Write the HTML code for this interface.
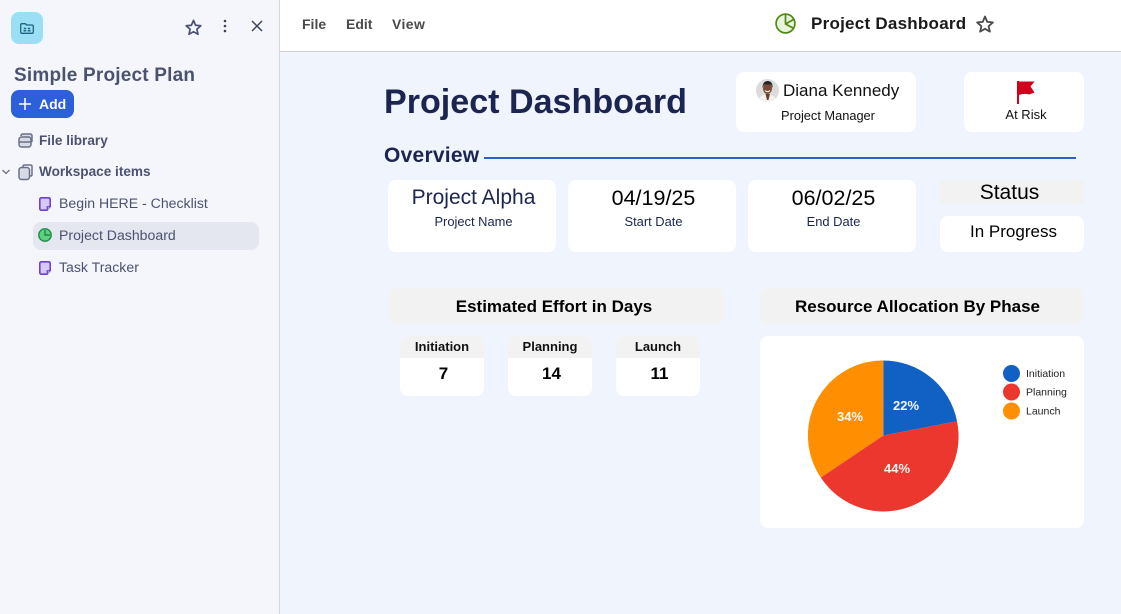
<!DOCTYPE html>
<html><head><meta charset="utf-8"><style>
html,body{margin:0;padding:0;width:1121px;height:614px;overflow:hidden;background:#f0f4fd;font-family:"Liberation Sans",sans-serif}
.a{position:absolute;white-space:nowrap}
.c{position:absolute;white-space:nowrap;text-align:center}
.b{position:absolute;background:#fff;border-radius:8px}
.g{position:absolute;background:#f2f2f2;border-radius:8px}
svg{position:absolute;overflow:visible}
.s{color:#4b5270;font-size:13.6px;font-weight:bold}
.n{color:#4b5270;font-size:14.1px}
</style></head><body>
<div class="a" style="left:0;top:0;width:279px;height:614px;background:#f5f6fb;border-right:1px solid #d4d6de"></div>
<div class="a" style="left:280px;top:0;width:841px;height:51px;background:#fff;border-bottom:1px solid #cfd0d3"></div>

<div class="a" style="left:11px;top:12px;width:32px;height:32px;background:#9bdff5;border-radius:8px"></div>
<svg style="left:20px;top:23px" width="14" height="11" viewBox="0 0 14 11" fill="none" stroke="#1d6480" stroke-width="1.3"><path d="M.7 1.800V9Q.7 10.300 2 10.300H12Q13.300 10.300 13.300 9V3.200Q13.300 2 12 2H6.500L5.300.7H1.800Q.7.700.7 1.800Z"/><path d="M3.800 5.500H6.200M7.800 5.500H10.200M3.500 7.800H6.200M7.800 7.800H10.500" stroke-width="1.500"/></svg>
<svg style="left:185px;top:19px" width="17" height="16" viewBox="0 0 24 23" fill="none" stroke="#4a5170" stroke-width="2.4" stroke-linejoin="round"><path d="M12 2l3 7 7.500.7-5.700 5 1.700 7.300L12 18.200 5.500 22l1.700-7.300-5.700-5L9 9z"/></svg>
<svg style="left:222px;top:19px" width="6" height="14"><circle cx="3" cy="2" r="1.300" fill="#3c4258"/><circle cx="3" cy="7" r="1.300" fill="#3c4258"/><circle cx="3" cy="12" r="1.300" fill="#3c4258"/></svg>
<svg style="left:251px;top:20px" width="12" height="12" fill="none" stroke="#3c4258" stroke-width="1.500"><path d="M1 1L11 11M11 1L1 11"/></svg>

<div class="a" style="left:14px;top:64px;font-size:19px;font-weight:bold;color:#4b5270;line-height:23px;letter-spacing:.2px">Simple Project Plan</div>
<div class="a" style="left:11px;top:90px;width:63px;height:28px;background:#2c5fd9;border-radius:8px"></div>
<svg style="left:19px;top:98px" width="12" height="12" stroke="#fff" stroke-width="1.500"><path d="M6 0V12M0 6H12"/></svg>
<div class="a" style="left:39px;top:96px;font-size:14px;font-weight:bold;color:#fff;line-height:16px">Add</div>

<svg style="left:18px;top:133px" width="15" height="15" viewBox="0 0 15 15" fill="#d8dbe6" stroke="#6a7088" stroke-width="1.500"><path d="M3 3Q3 1 5 1H12Q14 1 14 3V9"/><rect x="1" y="4" width="12" height="10" rx="2.500"/><path d="M1 9H13" /></svg>
<div class="a s" style="left:39px;top:132px;line-height:17px">File library</div>
<svg style="left:2px;top:169px" width="8" height="6" fill="none" stroke="#6a7088" stroke-width="1.300"><path d="M.5 1L4 4.500L7.500 1"/></svg>
<svg style="left:18px;top:164px" width="15" height="16" viewBox="0 0 15 16" fill="#d8dbe6" stroke="#6a7088" stroke-width="1.500"><path d="M5 3V2.500Q5 1 6.500 1H12.500Q14 1 14 2.500V10.500Q14 12 12.500 12H12" fill="none"/><rect x="1" y="3.500" width="10.500" height="12" rx="2.500"/></svg>
<div class="a s" style="left:39px;top:163px;line-height:17px">Workspace items</div>

<svg style="left:39px;top:197px" width="12" height="14" viewBox="0 0 12 14"><path d="M2.500 .8H9.500Q11.200 .8 11.200 2.500V9.500L8 13.200H2.500Q.8 13.200 .8 11.500V2.500Q.8 .8 2.500 .8Z" fill="#d5c9fa" stroke="#6d3fe0" stroke-width="1.600"/><path d="M11 9.800H8.300V13" fill="#fff" stroke="#6d3fe0" stroke-width="1.300"/></svg>
<div class="a n" style="left:59px;top:195px;line-height:17px">Begin HERE - Checklist</div>
<div class="a" style="left:33px;top:222px;width:226px;height:28px;background:#e4e6f0;border-radius:8px"></div>
<svg style="left:38px;top:228px" width="14" height="14" viewBox="0 0 14 14"><circle cx="7" cy="7" r="6.200" fill="#5fd07f" stroke="#1f8a45" stroke-width="1.400"/><path d="M7 2V7H12" fill="none" stroke="#1f8a45" stroke-width="1.400"/></svg>
<div class="a n" style="left:59px;top:227px;line-height:17px">Project Dashboard</div>
<svg style="left:39px;top:261px" width="12" height="14" viewBox="0 0 12 14"><path d="M2.500 .8H9.500Q11.200 .8 11.200 2.500V9.500L8 13.200H2.500Q.8 13.200 .8 11.500V2.500Q.8 .8 2.500 .8Z" fill="#d5c9fa" stroke="#6d3fe0" stroke-width="1.600"/><path d="M11 9.800H8.300V13" fill="#fff" stroke="#6d3fe0" stroke-width="1.300"/></svg>
<div class="a n" style="left:59px;top:259px;line-height:17px">Task Tracker</div>

<div class="a" style="left:302px;top:16px;font-size:14px;font-weight:bold;color:#4a4a4a;line-height:16px">File</div>
<div class="a" style="left:346px;top:16px;font-size:14px;font-weight:bold;color:#4a4a4a;line-height:16px">Edit</div>
<div class="a" style="left:392px;top:16px;font-size:14px;font-weight:bold;color:#4a4a4a;line-height:16px;letter-spacing:.4px">View</div>

<svg style="left:775px;top:13px" width="21" height="21" viewBox="0 0 21 21" fill="#eaf3dc" stroke="#4f8a10" stroke-width="1.700"><circle cx="10.500" cy="10.500" r="9.400"/><path d="M10.500 1.500V11L18 15M10.500 11L18.500 6.500" fill="none"/></svg>
<div class="a" style="left:811px;top:14px;font-size:17px;font-weight:bold;color:#1a1a1a;line-height:20px;letter-spacing:.25px">Project Dashboard</div>
<svg style="left:976px;top:15px" width="18" height="18" viewBox="0 0 24 24" fill="none" stroke="#4a4a4a" stroke-width="2.400" stroke-linejoin="round"><path d="M12 2l3 7.200 7.500.7-5.700 5 1.700 7.300L12 18.400 5.500 22.200l1.700-7.300-5.700-5L9 9.200z"/></svg>

<div class="a" style="left:384px;top:81px;font-size:34.100px;font-weight:bold;color:#1c2550;line-height:43px">Project Dashboard</div>
<div class="a" style="left:384px;top:144px;font-size:21px;font-weight:bold;color:#1c2550;line-height:24px;letter-spacing:.25px">Overview</div>
<div class="a" style="left:484px;top:157px;width:592px;height:2px;background:#2c5fd0"></div>

<div class="b" style="left:736px;top:72px;width:180px;height:60px"></div>
<svg style="left:756px;top:79px" width="23" height="23" viewBox="0 0 23 23"><defs><clipPath id="p"><circle cx="11.500" cy="11.500" r="11.500"/></clipPath></defs><g clip-path="url(#p)"><rect width="23" height="23" fill="#dcdcdc"/><path d="M2 23Q3 16 11 15Q20 16 21 23Z" fill="#f2f2f2"/><ellipse cx="11.500" cy="9.500" rx="4.500" ry="5.500" fill="#7a4a35"/><path d="M6.500 9Q6.500 2 12 2Q17 2.500 16.500 9L15 5.500H8Z" fill="#222"/><path d="M9 11.500Q11.500 14 14 11.500" stroke="#fff" fill="none"/><path d="M9.500 15L11 21H12.500L14 15Z" fill="#6a3f2e"/></g></svg>
<div class="a" style="left:783px;top:80px;font-size:17px;color:#111;line-height:21px">Diana Kennedy</div>
<div class="c" style="left:736px;top:108px;width:184px;font-size:12.800px;color:#111;line-height:16px">Project Manager</div>
<div class="b" style="left:964px;top:72px;width:120px;height:60px"></div>
<svg style="left:1017px;top:81px" width="18" height="23"><path d="M0 0H2V23H0Z" fill="#d0021b"/><path d="M2 0.500H17.500L13.500 5.500L17.500 11.500L12 13.500Q7 12 2 14Z" fill="#d0021b"/></svg>
<div class="c" style="left:964px;top:107px;width:124px;font-size:13px;color:#111;line-height:16px">At Risk</div>

<div class="b" style="left:388px;top:180px;width:168px;height:72px"></div>
<div class="c" style="left:388px;top:186px;width:171px;font-size:21px;color:#1c2550;line-height:24px">Project Alpha</div>
<div class="c" style="left:388px;top:214px;width:171px;font-size:12.900px;color:#1c2550;line-height:16px">Project Name</div>
<div class="b" style="left:568px;top:180px;width:168px;height:72px"></div>
<div class="c" style="left:568px;top:186px;width:171px;font-size:21.500px;color:#000;line-height:24px">04/19/25</div>
<div class="c" style="left:568px;top:214px;width:171px;font-size:12.900px;color:#1c2550;line-height:16px">Start Date</div>
<div class="b" style="left:748px;top:180px;width:168px;height:72px"></div>
<div class="c" style="left:748px;top:186px;width:171px;font-size:21.500px;color:#000;line-height:24px">06/02/25</div>
<div class="c" style="left:748px;top:214px;width:171px;font-size:12.900px;color:#1c2550;line-height:16px">End Date</div>
<div class="g" style="left:940px;top:180px;width:144px;height:24px;border-radius:4px"></div>
<div class="c" style="left:940px;top:181px;width:139px;font-size:21px;color:#000;line-height:24px">Status</div>
<div class="b" style="left:940px;top:216px;width:144px;height:36px"></div>
<div class="c" style="left:940px;top:222px;width:147px;font-size:17px;color:#000;line-height:20px">In Progress</div>

<div class="g" style="left:388px;top:288px;width:336px;height:36px"></div>
<div class="c" style="left:388px;top:297px;width:332px;font-size:17px;font-weight:bold;color:#000;line-height:20px">Estimated Effort in Days</div>
<div class="g" style="left:760px;top:288px;width:324px;height:36px"></div>
<div class="c" style="left:760px;top:297px;width:315px;font-size:17px;font-weight:bold;color:#000;line-height:20px">Resource Allocation By Phase</div>

<div class="b" style="left:400px;top:336px;width:84px;height:60px"></div>
<div class="a" style="left:400px;top:336px;width:84px;height:22px;background:#f2f2f2;border-radius:8px 8px 0 0"></div>
<div class="c" style="left:400px;top:338px;width:84px;font-size:13px;font-weight:bold;color:#111;line-height:17px">Initiation</div>
<div class="c" style="left:400px;top:363px;width:87px;font-size:17px;font-weight:bold;color:#000;line-height:21px">7</div>
<div class="b" style="left:508px;top:336px;width:84px;height:60px"></div>
<div class="a" style="left:508px;top:336px;width:84px;height:22px;background:#f2f2f2;border-radius:8px 8px 0 0"></div>
<div class="c" style="left:508px;top:338px;width:84px;font-size:13px;font-weight:bold;color:#111;line-height:17px">Planning</div>
<div class="c" style="left:508px;top:363px;width:87px;font-size:17px;font-weight:bold;color:#000;line-height:21px">14</div>
<div class="b" style="left:616px;top:336px;width:84px;height:60px"></div>
<div class="a" style="left:616px;top:336px;width:84px;height:22px;background:#f2f2f2;border-radius:8px 8px 0 0"></div>
<div class="c" style="left:616px;top:338px;width:84px;font-size:13px;font-weight:bold;color:#111;line-height:17px">Launch</div>
<div class="c" style="left:616px;top:363px;width:87px;font-size:17px;font-weight:bold;color:#000;line-height:21px">11</div>

<div class="b" style="left:760px;top:336px;width:324px;height:192px"></div>
<svg style="left:0;top:0" width="1121" height="614">
<path d="M883.300 435.500V360.500A75 75 0 0 1 957 421.200Z" fill="#1160c4"/>
<path d="M883.300 435.500L957 421.200A75 75 0 0 1 820.800 477.500Z" fill="#ec372f"/>
<path d="M883.300 435.500L820.800 477.500A75 75 0 0 1 883.300 360.500Z" fill="#ff8f00"/>
<circle cx="1011.500" cy="373.500" r="8.500" fill="#1160c4"/>
<circle cx="1011.500" cy="392" r="8.500" fill="#ec372f"/>
<circle cx="1011.500" cy="411" r="8.500" fill="#ff8f00"/>
<g font-family="Liberation Sans, sans-serif" font-size="13" fill="#fff" font-weight="bold" opacity=".95">
<text x="893" y="410">22%</text><text x="837" y="421">34%</text><text x="884" y="473">44%</text></g>
<g font-family="Liberation Sans, sans-serif" font-size="10.500" fill="#222">
<text x="1026" y="377">Initiation</text><text x="1026" y="395.500">Planning</text><text x="1026" y="414.500">Launch</text></g>
</svg>
</body></html>
